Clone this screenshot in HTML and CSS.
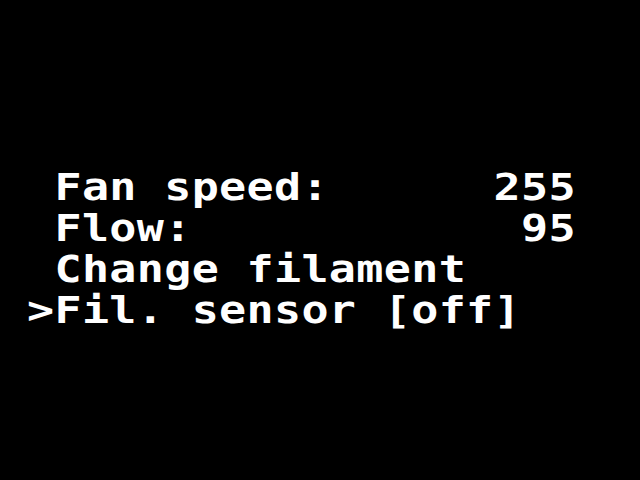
FILE: index.html
```html
<!DOCTYPE html>
<html>
<head>
<meta charset="utf-8">
<link rel="stylesheet" href="styles.css">
</head>
<body>
<div class="screen">
  <div class="lcd">
    <div class="row"> Fan speed:      255</div>
    <div class="row"> Flow:            95</div>
    <div class="row"> Change filament</div>
    <div class="row">&gt;Fil. sensor [off]</div>
  </div>
</div>
</body>
</html>
```
FILE: styles.css
```css
html, body {
  margin: 0;
  padding: 0;
  background: #000;
  width: 640px;
  height: 480px;
  overflow: hidden;
}
.screen {
  padding-top: 167px;
  padding-left: 27px;
}
.lcd {
  display: flex;
  flex-direction: column;
  transform: scaleY(0.82);
  transform-origin: top left;
  color: #fff;
  font-family: "DejaVu Sans Mono", monospace;
  font-weight: bold;
  font-size: 45px;
  line-height: 50px;
  letter-spacing: 0.35px;
}
.row {
  white-space: pre;
  height: 50px;
}
```
